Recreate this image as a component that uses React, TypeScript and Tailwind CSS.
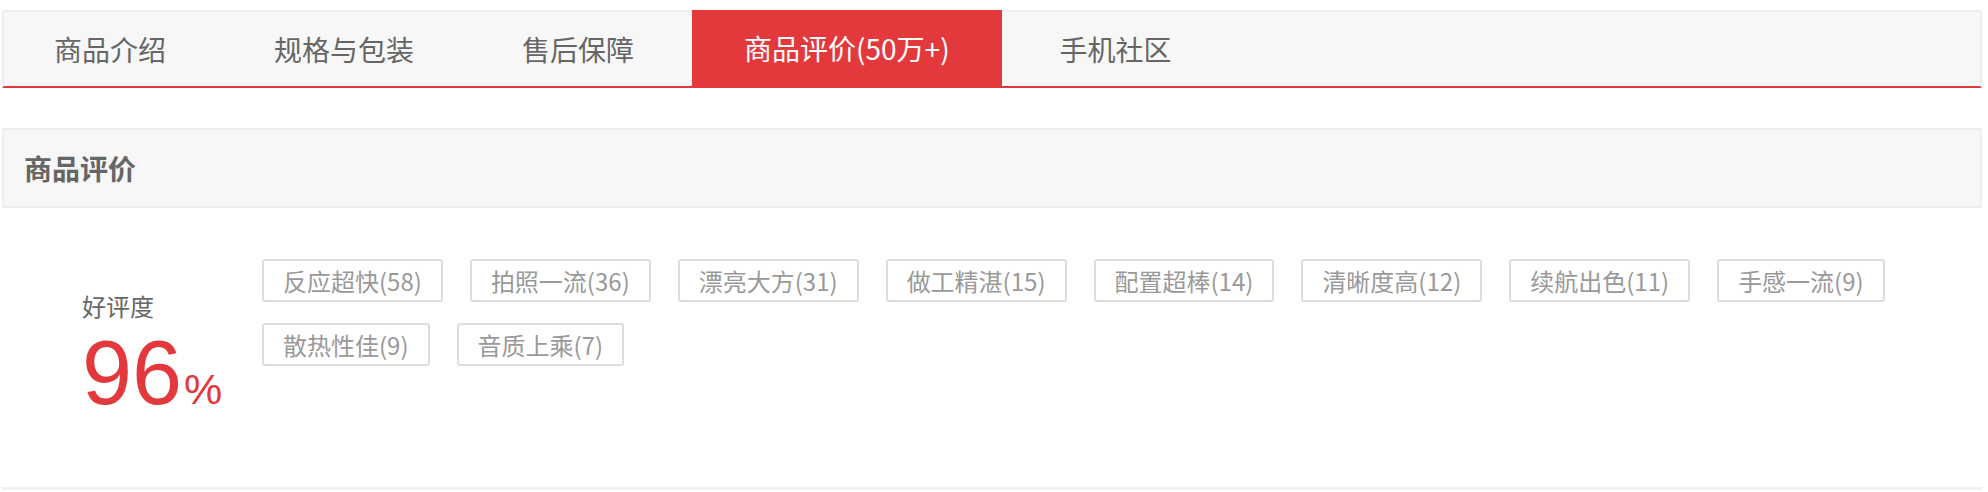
import React from "react";

const tabs = ["商品介绍", "规格与包装", "售后保障", "商品评价(50万+)", "手机社区"];
const tags = [
  "反应超快(58)",
  "拍照一流(36)",
  "漂亮大方(31)",
  "做工精湛(15)",
  "配置超棒(14)",
  "清晰度高(12)",
  "续航出色(11)",
  "手感一流(9)",
  "散热性佳(9)",
  "音质上乘(7)",
];

export default function App() {
  return (
    <div className="w-[1988px] h-[492px] bg-white overflow-hidden font-['Noto_Sans_CJK_SC','Microsoft_YaHei',sans-serif]">
      {/* tab bar */}
      <div className="pt-[10px] pl-[2px]">
        <div className="w-[1980px] h-[78px] border-2 border-[#eeeeee] border-b-[#e4393c] bg-[#f7f7f7] flex gap-[8px]">
          {tabs.map((t, i) =>
            i === 3 ? (
              <div
                key={t}
                className="mt-[-2px] h-[76px] px-[52px] flex items-center bg-[#e4393c] text-white text-[28px] leading-[28px]"
              >
                {t}
              </div>
            ) : (
              <div
                key={t}
                className="h-[74px] px-[50px] flex items-center text-[#666666] text-[28px] leading-[28px]"
              >
                {t}
              </div>
            )
          )}
        </div>
      </div>

      {/* header */}
      <div className="pt-[40px] pl-[2px]">
        <div className="w-[1980px] h-[80px] border-2 border-[#eeeeee] bg-[#f7f7f7] flex items-center pl-[20px]">
          <span className="text-[28px] leading-[28px] font-bold text-[#666666]">商品评价</span>
        </div>
      </div>

      {/* content */}
      <div className="flex h-[279px]">
        <div className="w-[262px] shrink-0 pl-[82px] pt-[86px]">
          <div className="text-[24px] leading-[24px] text-[#666666]">好评度</div>
          <div className="mt-[10px] flex items-baseline text-[#e4393c] font-['Liberation_Sans',Arial,sans-serif] leading-none">
            <span className="text-[90px] leading-[90px]">96</span>
            <span className="text-[43px] leading-[43px] ml-[2px]">%</span>
          </div>
        </div>
        <div className="pt-[51px] w-[1700px]">
          <div className="flex flex-wrap gap-x-[27px] gap-y-[21px]">
            {tags.map((t) => (
              <div
                key={t}
                className="h-[43px] border-2 border-[#dddddd] rounded-[3px] px-[19px] flex items-center text-[24px] leading-[24px] text-[#999999]"
              >
                {t}
              </div>
            ))}
          </div>
        </div>
      </div>

      {/* bottom border of next section */}
      <div className="pl-[2px]">
        <div className="w-[1980px] h-[5px] border-t-[3px] border-[#f2f2f2]" />
      </div>
    </div>
  );
}
